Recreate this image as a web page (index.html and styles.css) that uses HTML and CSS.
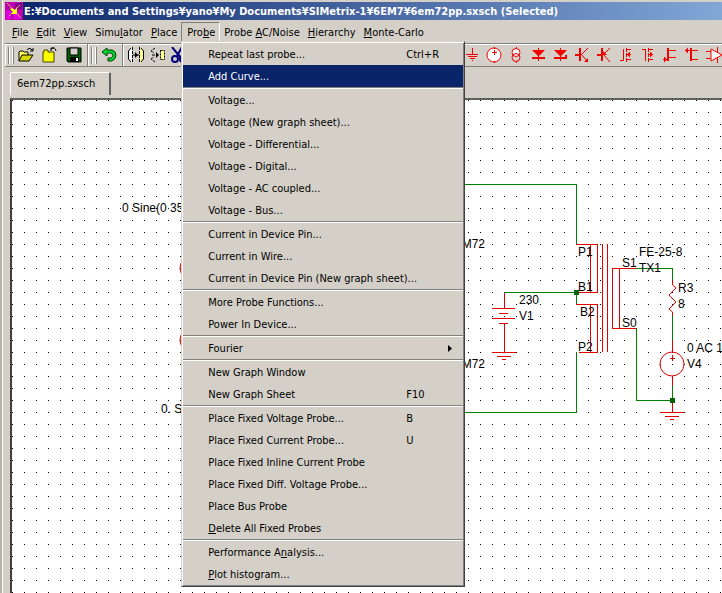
FILE: index.html
```html
<!DOCTYPE html>
<html lang="en">
<head>
    <meta charset="UTF-8">
    <meta name="viewport" content="width=device-width, initial-scale=1.0">
    <title>6em72pp.sxsch</title>
    <link rel="stylesheet" href="styles.css">
</head>
<body>
    <div class="behind"></div>
    <div class="window">
        <header class="titlebar">
            <svg class="appicon" width="18" height="18" viewBox="0 0 18 18" aria-hidden="true">
                <path fill="#c000b0" d="M0 0h18v18H0z"/>
                <path fill="#e000e0" d="M1 9h5v8H1zM9 12h6v5H9z"/>
                <path fill="#800090" d="M10 1h7v6h-7z"/>
                <path stroke="#e0b060" d="M2 1l14 15M15 3L4 14" fill="none"/>
                <path fill="#ffff20" d="M12 5v7H6l2-2-3-3 2-1 3 2z"/>
            </svg>
            <h1>E:¥Documents and Settings¥yano¥My Documents¥SIMetrix-1¥6EM7¥6em72pp.sxsch (Selected)</h1>
        </header>

        <nav class="menubar">
            <button type="button"><u>F</u>ile</button>
            <button type="button"><u>E</u>dit</button>
            <button type="button"><u>V</u>iew</button>
            <button type="button">Simu<u>l</u>ator</button>
            <button type="button"><u>P</u>lace</button>
            <div class="dropdown">
                <button type="button" class="open">Pro<u>b</u>e</button>
                <div class="menu">
                    <button type="button"><span>Repeat last probe...</span><kbd>Ctrl+R</kbd></button>
                    <button type="button" class="active"><span>Add Curve...</span></button>
                    <hr>
                    <button type="button"><span>Voltage...</span></button>
                    <button type="button"><span>Voltage (New graph sheet)...</span></button>
                    <button type="button"><span>Voltage - Differential...</span></button>
                    <button type="button"><span>Voltage - Digital...</span></button>
                    <button type="button"><span>Voltage - AC coupled...</span></button>
                    <button type="button"><span>Voltage - Bus...</span></button>
                    <hr>
                    <button type="button"><span>Current in Device Pin...</span></button>
                    <button type="button"><span>Current in Wire...</span></button>
                    <button type="button"><span>Current in Device Pin (New graph sheet)...</span></button>
                    <hr>
                    <button type="button"><span>More Probe Functions...</span></button>
                    <button type="button"><span>Power In Device...</span></button>
                    <hr>
                    <button type="button"><span>Fourier</span>
                        <svg class="arrow" width="4" height="7" viewBox="0 0 4 7" aria-hidden="true"><path d="M0 0l4 3.5L0 7z"/></svg>
                    </button>
                    <hr>
                    <button type="button"><span>New Graph Window</span></button>
                    <button type="button"><span>New Graph Sheet</span><kbd>F10</kbd></button>
                    <hr>
                    <button type="button"><span>Place Fixed Voltage Probe...</span><kbd>B</kbd></button>
                    <button type="button"><span>Place Fixed Current Probe...</span><kbd>U</kbd></button>
                    <button type="button"><span>Place Fixed Inline Current Probe</span></button>
                    <button type="button"><span>Place Fixed Diff. Voltage Probe...</span></button>
                    <button type="button"><span>Place Bus Probe</span></button>
                    <button type="button"><span><u>D</u>elete All Fixed Probes</span></button>
                    <hr>
                    <button type="button"><span>Performance A<u>n</u>alysis...</span></button>
                    <button type="button"><span><u>P</u>lot histogram...</span></button>
                </div>
            </div>
            <button type="button">Probe <u>A</u>C/Noise</button>
            <button type="button"><u>H</u>ierarchy</button>
            <button type="button"><u>M</u>onte-Carlo</button>
        </nav>

        <div class="toolbar">
            <div class="group">
                <i class="grip"></i>
                <button type="button" aria-label="Open">
                    <svg width="16" height="16" viewBox="0 0 16 16">
                        <path d="M1 14V5l1-1h3l1 1h4v3" fill="#ffff60" stroke="#000"/>
                        <path d="M1 14l3-6h11l-4 6z" fill="#d8d800" stroke="#000"/>
                        <path d="M9 3q2-3 4-1l2 2M15 1v3h-3" fill="none" stroke="#000"/>
                    </svg>
                </button>
                <button type="button" aria-label="New">
                    <svg width="16" height="16" viewBox="0 0 16 16">
                        <path d="M1 15V5h1V3h4v2h6v10z" fill="#ffff00" stroke="#404000"/>
                        <path d="M9 2q4-3 5 2M12 1H9v3" fill="none" stroke="#000"/>
                    </svg>
                </button>
                <button type="button" aria-label="Save">
                    <svg width="16" height="16" viewBox="0 0 16 16">
                        <path d="M1 1h14v14H2l-1-1z" fill="#006000" stroke="#000"/>
                        <path d="M4 1h8v7H4z" fill="#d4d0c8" stroke="#000"/>
                        <path d="M4 10h9v5H4z"/>
                        <path d="M10 11h2v3h-2z" fill="#fff"/>
                    </svg>
                </button>
            </div>
            <div class="group">
                <i class="grip"></i>
                <button type="button" aria-label="Undo">
                    <svg width="16" height="16" viewBox="0 0 16 16">
                        <path d="M1 5l5-4v2h5q4 1 4 5t-4 6H7v-3h3q2-1 2-3t-3-2H6v3z" fill="#00d830" stroke="#004000"/>
                    </svg>
                </button>
            </div>
            <div class="group edit">
                <button type="button" aria-label="Mirror">
                    <svg width="18" height="16" viewBox="0 0 18 16">
                        <path d="M5 0L2 3v10l3 3z" fill="#fff"/>
                        <path d="M13 0l3 3v10l-3 3z" fill="#ffff90"/>
                        <path d="M5.5 0v16M12.5 0v16" stroke="#000" stroke-dasharray="3 1"/>
                        <path d="M4 1L1.500 4v8L4 15M14 1l2.500 3v8L14 15M6 8h6" fill="none" stroke="#000"/>
                        <path d="M8 5l3 3-3 3z"/>
                    </svg>
                </button>
                <button type="button" aria-label="Flip">
                    <svg width="16" height="16" viewBox="0 0 16 16">
                        <path d="M10.500 3.500h4v9h-4z" fill="#ffff90" stroke="#000" stroke-dasharray="2 1"/>
                        <path d="M5 1L1 4l3 2M5 15l-4-3 3-2M2 8h6" fill="none" stroke="#000" stroke-dasharray="3 1"/>
                        <path d="M6 5l3 3-3 3z"/>
                    </svg>
                </button>
                <button type="button" aria-label="Cut">
                    <svg width="16" height="16" viewBox="0 0 16 16">
                        <path d="M1 0l9 11M11 0L6 9" stroke="#000080" stroke-width="2"/>
                        <circle cx="4" cy="12" r="3" fill="none" stroke="#000080" stroke-width="2"/>
                        <circle cx="12" cy="12" r="3" fill="none" stroke="#000080" stroke-width="2"/>
                    </svg>
                </button>
            </div>
            <div class="group parts">
                <button type="button" aria-label="Ground">
                    <svg width="16" height="16" viewBox="0 0 16 16"><path d="M8.5 1v7M2 7.5h12M4 9.5h9M6 11.5h5M8 13.5h1"/></svg>
                </button>
                <button type="button" aria-label="Voltage source">
                    <svg width="16" height="16" viewBox="0 0 16 16"><circle cx="8" cy="8" r="7" fill="#fff"/><path d="M8.5 0v2M8.5 14v2M8.5 3v5M6 5.5h5"/></svg>
                </button>
                <button type="button" aria-label="Current source">
                    <svg width="16" height="16" viewBox="0 0 16 16"><circle cx="8" cy="5.5" r="4" fill="#fff"/><circle cx="8" cy="10.5" r="4" fill="none"/><path d="M8.5 0v2M8.5 14v2"/></svg>
                </button>
                <button type="button" aria-label="Diode">
                    <svg width="16" height="16" viewBox="0 0 16 16"><path class="solid" d="M2 3h13l-6 6H8zM2 10h13v2H2z"/><path d="M8.5 1v13"/></svg>
                </button>
                <button type="button" aria-label="Zener">
                    <svg width="16" height="16" viewBox="0 0 16 16"><path class="solid" d="M2 3h13l-6 6H8zM2 10h11V8h2v4H2z"/><path d="M8.5 1v13"/></svg>
                </button>
                <button type="button" aria-label="NPN">
                    <svg width="16" height="16" viewBox="0 0 16 16"><path class="thick" d="M6 1v13M1 8h5"/><path d="M7 8l7-7M7 7l7 8"/><path class="solid" d="M14 15v-4l-4 4z"/></svg>
                </button>
                <button type="button" aria-label="PNP">
                    <svg width="16" height="16" viewBox="0 0 16 16"><path class="thick" d="M6 1v13M1 8h5"/><path d="M7 8l7-7M7 7l7 8"/><path class="solid" d="M7 8V4l4 4z"/></svg>
                </button>
                <button type="button" aria-label="NMOS">
                    <svg width="16" height="16" viewBox="0 0 16 16"><path d="M5.5 2v11.500H2M8.5 1v4M8.5 6v4M8.5 11v4M8 2.500h5M8 7.500h5M8 12.500h5"/><path class="solid" d="M9 7.500l3-3v6z"/></svg>
                </button>
                <button type="button" aria-label="PMOS">
                    <svg width="16" height="16" viewBox="0 0 16 16"><path d="M2 2.500h3.500V14M8.5 1v4M8.5 6v4M8.5 11v4M8 2.500h5M8 7.500h5M8 12.500h5"/><path class="solid" d="M13 7.500l-3-3v6z"/></svg>
                </button>
                <button type="button" aria-label="N JFET">
                    <svg width="16" height="16" viewBox="0 0 16 16"><path class="thick" d="M6 1v13"/><path d="M6 3.500h8M1 12.500h5M6 10.500h8"/><path class="solid" d="M5 12.500l-3-3v6z"/></svg>
                </button>
                <button type="button" aria-label="P JFET">
                    <svg width="16" height="16" viewBox="0 0 16 16"><path class="thick" d="M7 1v13"/><path d="M1 3.500h13M7 12.500h7"/><path class="solid" d="M1 3.500l3-3v6z"/></svg>
                </button>
                <button type="button" aria-label="Op-amp">
                    <svg width="16" height="16" viewBox="0 0 16 16"><path d="M5 2l11 6-11 6z" fill="#fff"/><path d="M0 4.500h5M0 11.500h5M11.500 0v5M11.500 11v5"/></svg>
                </button>
            </div>
        </div>

        <div class="tabs">
            <button type="button" class="tab">6em72pp.sxsch</button>
        </div>

        <main class="sheet">
            <svg width="100%" height="100%" shape-rendering="crispEdges">
                <defs>
                    <pattern id="grid" width="12" height="12" patternUnits="userSpaceOnUse">
                        <rect width="1" height="1"/>
                    </pattern>
                </defs>
                <rect width="100%" height="100%" fill="url(#grid)"/>
                <g class="wire">
                    <path d="M430 84H564V144"/>
                    <path d="M430 312H564V252"/>
                    <path d="M492 192H564V204"/>
                    <path d="M618 168H660V180"/>
                    <path d="M660 216V240M660 286V300H624V228"/>
                </g>
                <g class="part">
                    <!-- TX1 -->
                    <path d="M564 144H585M578 144V192M585 144V192H564"/>
                    <path d="M564 204H585M578 204V252M585 204V252H567"/>
                    <path d="M590 144V252M595 144V252"/>
                    <path d="M624 168H600V228H624M607 168V228"/>
                    <!-- V1 -->
                    <path d="M492 193V208M480 208H503M487 213H496M480 218H503M487 223H496M492 223V252"/>
                    <path d="M480 252H504M485 256H499M490 259H494"/>
                    <!-- V4 -->
                    <path d="M660 240V252M660 276V286M660 300V312M648 312H672M653 316H667M658 319H662M658 258H663M660 255V261"/>
                    <g shape-rendering="auto">
                        <path d="M660.5 180V185L664 188 657 195 664 202 657 209 660.5 212V216"/>
                        <circle cx="660" cy="264" r="12"/>
                        <circle cx="180" cy="168" r="12"/>
                        <circle cx="180" cy="240" r="12"/>
                    </g>
                </g>
                <path class="node" d="M562 190h5v5h-5zM658 298h5v5h-5z"/>
                <g class="label">
                    <text x="110" y="112">0 Sine(0 35</text>
                    <text x="149" y="313">0. Sine(0</text>
                    <text x="473" y="148" text-anchor="end">6EM72</text>
                    <text x="473" y="268" text-anchor="end">6EM72</text>
                    <text x="507" y="204">230</text>
                    <text x="507" y="220">V1</text>
                    <text x="566" y="156">P1</text>
                    <text x="566" y="191">B1</text>
                    <text x="568" y="216">B2</text>
                    <text x="566" y="251">P2</text>
                    <text x="610" y="167">S1</text>
                    <text x="610" y="227">S0</text>
                    <text x="627" y="156">FE-25-8</text>
                    <text x="627" y="172">TX1</text>
                    <text x="666" y="192">R3</text>
                    <text x="666" y="208">8</text>
                    <text x="675" y="252">0 AC 1</text>
                    <text x="675" y="268">V4</text>
                </g>
            </svg>
        </main>
    </div>
</body>
</html>
```
FILE: styles.css
```css
*{box-sizing:border-box;}
body{
    margin:0;
    height:100vh;
    display:flex;
    overflow:hidden;
    background:#d4d0c8;
    font-family:"DejaVu Sans Condensed","DejaVu Sans",sans-serif;
    font-size:11px;
    color:#000;
}
button{
    margin:0;
    padding:0;
    border:0;
    background:none;
    font:inherit;
    color:inherit;
    white-space:nowrap;
}
u{text-underline-offset:1px;}
svg{display:block;}

.behind{
    flex:none;
    width:5px;
    background:#d4d0c8;
    border-left:2px solid #b8b4ac;
    box-shadow:inset 1px 0 #fff;
}
.window{
    flex:1;
    min-width:0;
    display:flex;
    flex-direction:column;
    padding-top:2px;
}
.titlebar{
    flex:none;
    height:18px;
    display:flex;
    align-items:center;
    gap:1px;
    background:linear-gradient(90deg,#0a246a,#82a6d6);
}
.titlebar h1{
    margin:0;
    font-size:11px;
    color:#fff;
    white-space:nowrap;
}

.menubar{
    flex:none;
    height:23px;
    display:flex;
    align-items:flex-start;
    padding:2px 0 0 3px;
}
.menubar > button,
.dropdown > button{
    height:20px;
    padding:0 4px;
}
.dropdown{position:relative;}
.dropdown > .open{
    padding:1px 4px 0 5px;
    border:1px solid;
    border-color:#808080 #fff #fff #808080;
}
.menu{
    position:absolute;
    z-index:1;
    top:19px;
    left:0;
    width:284px;
    padding:1px;
    background:#d4d0c8;
    border:1px solid;
    border-color:#d4d0c8 #404040 #404040 #d4d0c8;
    box-shadow:inset 1px 1px #fff,inset -1px -1px #808080;
}
.menu button{
    width:100%;
    height:22px;
    display:flex;
    align-items:center;
    padding-left:25px;
    text-align:left;
}
.menu button span{flex:1;}
.menu kbd{
    width:57px;
    font:inherit;
}
.menu .active{
    background:#0a246a;
    color:#fff;
}
.menu .arrow{margin-right:11px;}
.menu hr{
    height:2px;
    margin:0;
    border:0;
    border-top:1px solid #808080;
    background:#fff;
}

.toolbar{
    flex:none;
    height:24px;
    display:flex;
    overflow:hidden;
    border-top:1px solid #808080;
    border-bottom:1px solid #808080;
    box-shadow:inset 0 1px #fff;
}
.group{
    flex:none;
    display:flex;
    align-items:center;
    gap:8px;
    padding:0 5px 0 3px;
    border-right:1px solid #808080;
    box-shadow:inset 1px 0 #fff;
}
.group .grip{
    width:6px;
    height:17px;
    margin-right:-4px;
    border:1px solid #808080;
    border-width:0 1px;
    box-shadow:inset 1px 0 #fff,inset -1px 0 #fff;
}
.group.edit{
    gap:5px;
    padding-left:4px;
    border-right:0;
}
.group.parts{
    margin-left:272px;
    padding:0;
    gap:6px;
    border:0;
    box-shadow:none;
}
.parts svg{
    fill:none;
    stroke:#f00000;
}
.parts .thick{stroke-width:2;}
.parts .solid{
    fill:#f00000;
    stroke:none;
}

.tabs{
    flex:none;
    height:31px;
    display:flex;
    align-items:flex-start;
    padding:5px 0 0 5px;
}
.tab{
    height:23px;
    padding:0 14px 2px 6px;
    border:1px solid #fff;
    border-right:2px solid #606060;
    border-bottom:0;
    border-radius:2px 2px 0 0;
}

.sheet{
    flex:1;
    min-height:0;
    margin-left:5px;
    background:#fff;
    border:solid #404040;
    border-width:2px 0 0 2px;
    border-top-color:#606060;
}
.wire,.part{
    fill:none;
    stroke:#008000;
}
.part{stroke:#e00000;}
.node{fill:#006400;}
.label{
    font-family:"Liberation Sans",Arial,sans-serif;
    font-size:12px;
}
```
